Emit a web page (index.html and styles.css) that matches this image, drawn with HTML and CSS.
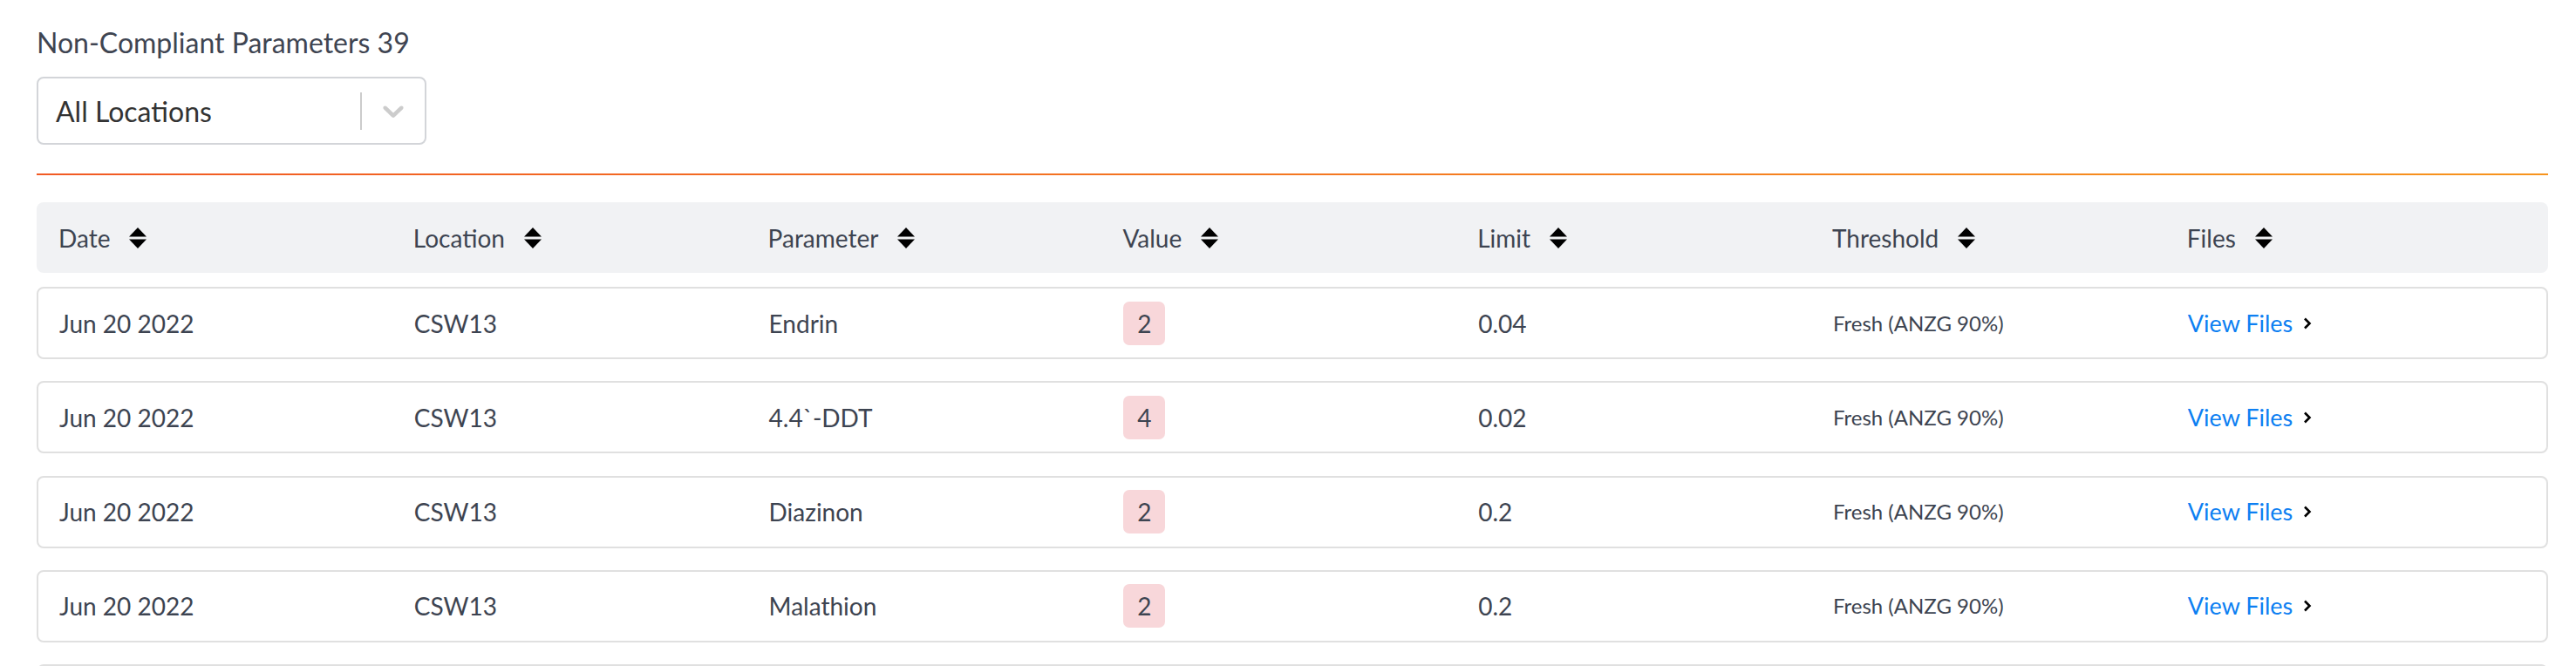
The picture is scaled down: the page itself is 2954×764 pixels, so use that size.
FILE: index.html
```html
<!DOCTYPE html>
<html lang="en">
<head>
<meta charset="utf-8">
<title>Non-Compliant Parameters</title>
<link rel="stylesheet" href="styles.css">
</head>
<body>
<div class="page">
  <h2 class="title">Non-Compliant Parameters 39</h2>
  <div class="select">
    <div class="select-value">All Locations</div>
    <div class="select-indicators">
      <span class="select-sep"></span>
      <span class="select-arrow">
        <svg width="40" height="40" viewBox="0 0 20 20"><path d="M4.516 7.548c0.436-0.446 1.043-0.481 1.576 0l3.908 3.747 3.908-3.747c0.533-0.481 1.141-0.446 1.574 0 0.436 0.445 0.408 1.197 0 1.615-0.406 0.418-4.695 4.502-4.695 4.502-0.217 0.223-0.502 0.335-0.787 0.335s-0.57-0.112-0.789-0.335c0 0-4.287-4.084-4.695-4.502s-0.436-1.17 0-1.615z" fill="#cccccc"/></svg>
      </span>
    </div>
  </div>
  <div class="divider"></div>

  <div class="table">
    <div class="thead">
      <div class="th">Date <svg class="sort" width="20" height="24" viewBox="0 0 20 24"><polygon points="0,10.5 10,0 20,10.5"/><polygon points="0,13.5 20,13.5 10,24"/></svg></div>
      <div class="th">Location <svg class="sort" width="20" height="24" viewBox="0 0 20 24"><polygon points="0,10.5 10,0 20,10.5"/><polygon points="0,13.5 20,13.5 10,24"/></svg></div>
      <div class="th">Parameter <svg class="sort" width="20" height="24" viewBox="0 0 20 24"><polygon points="0,10.5 10,0 20,10.5"/><polygon points="0,13.5 20,13.5 10,24"/></svg></div>
      <div class="th">Value <svg class="sort" width="20" height="24" viewBox="0 0 20 24"><polygon points="0,10.5 10,0 20,10.5"/><polygon points="0,13.5 20,13.5 10,24"/></svg></div>
      <div class="th">Limit <svg class="sort" width="20" height="24" viewBox="0 0 20 24"><polygon points="0,10.5 10,0 20,10.5"/><polygon points="0,13.5 20,13.5 10,24"/></svg></div>
      <div class="th">Threshold <svg class="sort" width="20" height="24" viewBox="0 0 20 24"><polygon points="0,10.5 10,0 20,10.5"/><polygon points="0,13.5 20,13.5 10,24"/></svg></div>
      <div class="th">Files <svg class="sort" width="20" height="24" viewBox="0 0 20 24"><polygon points="0,10.5 10,0 20,10.5"/><polygon points="0,13.5 20,13.5 10,24"/></svg></div>
    </div>

    <div class="tr">
      <div class="td">Jun 20 2022</div>
      <div class="td">CSW13</div>
      <div class="td">Endrin</div>
      <div class="td"><span class="badge">2</span></div>
      <div class="td">0.04</div>
      <div class="td small">Fresh (ANZG 90%)</div>
      <div class="td"><a class="link" href="#">View Files</a><svg class="chev" width="10" height="14" viewBox="0 0 10 14"><path d="M2 1.5 L7.5 7 L2 12.5" fill="none" stroke="#000" stroke-width="2.6"/></svg></div>
    </div>
    <div class="tr">
      <div class="td">Jun 20 2022</div>
      <div class="td">CSW13</div>
      <div class="td">4.4`-DDT</div>
      <div class="td"><span class="badge">4</span></div>
      <div class="td">0.02</div>
      <div class="td small">Fresh (ANZG 90%)</div>
      <div class="td"><a class="link" href="#">View Files</a><svg class="chev" width="10" height="14" viewBox="0 0 10 14"><path d="M2 1.5 L7.5 7 L2 12.5" fill="none" stroke="#000" stroke-width="2.6"/></svg></div>
    </div>
    <div class="tr">
      <div class="td">Jun 20 2022</div>
      <div class="td">CSW13</div>
      <div class="td">Diazinon</div>
      <div class="td"><span class="badge">2</span></div>
      <div class="td">0.2</div>
      <div class="td small">Fresh (ANZG 90%)</div>
      <div class="td"><a class="link" href="#">View Files</a><svg class="chev" width="10" height="14" viewBox="0 0 10 14"><path d="M2 1.5 L7.5 7 L2 12.5" fill="none" stroke="#000" stroke-width="2.6"/></svg></div>
    </div>
    <div class="tr">
      <div class="td">Jun 20 2022</div>
      <div class="td">CSW13</div>
      <div class="td">Malathion</div>
      <div class="td"><span class="badge">2</span></div>
      <div class="td">0.2</div>
      <div class="td small">Fresh (ANZG 90%)</div>
      <div class="td"><a class="link" href="#">View Files</a><svg class="chev" width="10" height="14" viewBox="0 0 10 14"><path d="M2 1.5 L7.5 7 L2 12.5" fill="none" stroke="#000" stroke-width="2.6"/></svg></div>
    </div>
    <div class="tr tr-partial"></div>
  </div>
</div>
</body>
</html>
```

FILE: styles.css
```css
* { box-sizing: border-box; }

html, body {
  margin: 0;
  padding: 0;
  background: #ffffff;
}

body {
  font-family: Lato, "Open Sans", "Liberation Sans", sans-serif;
  color: #3d4451;
  overflow: hidden;
}

.page {
  padding: 30px 32px 0 42px;
  height: 764px;
  overflow: hidden;
}

.title {
  margin: 0;
  font-size: 32px;
  font-weight: 400;
  line-height: 38px;
  color: #3f4552;
}

.select {
  margin-top: 20px;
  width: 447px;
  height: 78px;
  border: 2px solid #d3d5d9;
  border-radius: 8px;
  display: flex;
  align-items: center;
  background: #fff;
}

.select-value {
  flex: 1;
  padding: 1px 0 0 20px;
  font-size: 32px;
  line-height: 38px;
  color: #333333;
}

.select-indicators {
  display: flex;
  align-items: center;
  height: 100%;
}

.select-sep {
  width: 2px;
  height: 43px;
  background: #cccccc;
}

.select-arrow {
  display: flex;
  padding: 0 16px;
}

.divider {
  margin-top: 33px;
  height: 2px;
  background: linear-gradient(to right, #f15a24, #f7941d);
}

.table {
  margin-top: 31px;
  display: flex;
  flex-direction: column;
}

.thead {
  display: grid;
  grid-template-columns: repeat(7, 406.8px);
  align-items: center;
  height: 81px;
  padding-left: 25px;
  background: #f1f2f4;
  border-radius: 8px;
  margin-bottom: 16px;
}

.th {
  display: flex;
  align-items: center;
  gap: 22px;
  font-size: 28px;
  line-height: 34px;
  color: #3d4451;
}

.sort {
  flex: none;
  fill: #000;
}

.tr {
  display: grid;
  grid-template-columns: repeat(7, 406.8px);
  align-items: center;
  height: 83px;
  padding-left: 24px;
  border: 2px solid #e0e0e0;
  border-radius: 8px;
  margin-bottom: 25.25px;
  flex: none;
}

.td {
  display: flex;
  align-items: center;
  font-size: 28px;
  line-height: 34px;
  color: #3d4451;
}

.td.small {
  font-size: 24px;
}

.badge {
  display: inline-flex;
  align-items: center;
  justify-content: center;
  width: 48px;
  height: 50px;
  background: #f8d7da;
  border-radius: 7px;
}

.link {
  color: #0d7ff2;
  text-decoration: none;
  font-size: 27px;
}

.chev {
  margin-left: 12px;
  flex: none;
}
```
